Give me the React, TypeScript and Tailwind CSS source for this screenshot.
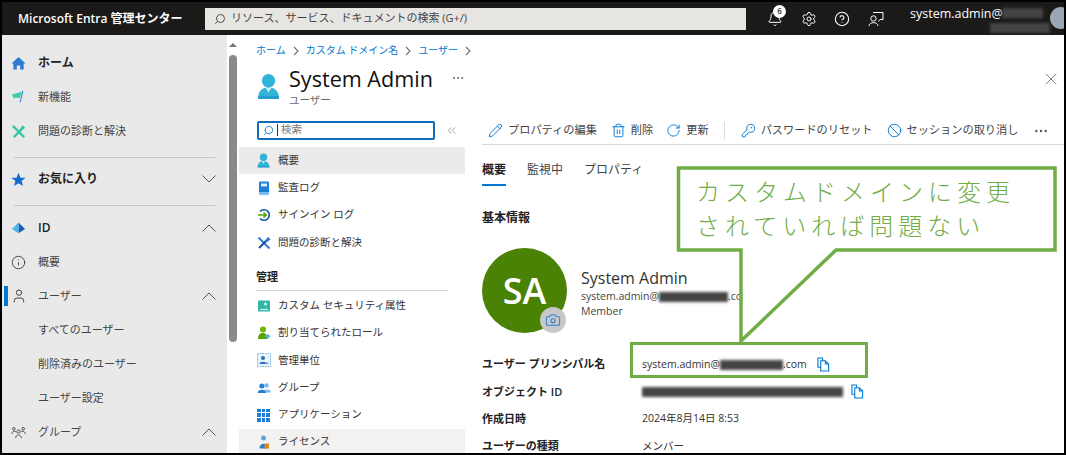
import type { ReactNode } from "react";
import {
  Ban,
  Bell,
  Camera,
  ChevronsLeft,
  CircleHelp,
  Ellipsis,
  Info,
  KeyRound,
  Pencil,
  RotateCw,
  Search,
  Settings,
  Trash2,
  User,
  X,
} from "lucide-react";

function Redact({ className }: { className: string }) {
  return <span className={`inline-block bg-[#444] blur-[1.5px] ${className}`} />;
}

function HomeIcon() {
  return (
    <svg viewBox="0 0 16 16" className="w-[15px] h-[15px]">
      <path d="M8 1 L15.5 8 L13.5 8 L13.5 14.5 L9.8 14.5 L9.8 10 L6.2 10 L6.2 14.5 L2.5 14.5 L2.5 8 L.5 8 Z" fill="#2b7cd3" />
    </svg>
  );
}

function FlagIcon() {
  return (
    <svg viewBox="0 0 16 16" className="w-[14px] h-[14px]">
      <path d="M1 5 L12 2 L10 9 L5 8.5 L3.5 10 Z" fill="#36d1a8" />
      <path d="M13.5 1 L10.5 14" stroke="#2b7cd3" strokeWidth="1.2" />
    </svg>
  );
}

function ToolsIcon() {
  return (
    <svg viewBox="0 0 16 16" className="w-[15px] h-[15px]">
      <path d="M2 2 L14 14" stroke="#36c5a8" strokeWidth="2.4" />
      <path d="M14 3 L3 14" stroke="#36c5a8" strokeWidth="2.4" />
      <path d="M9 6 L12 1.5 L15 4 L10.5 7.5 Z" fill="#36c5a8" />
    </svg>
  );
}

function StarIcon() {
  return (
    <svg viewBox="0 0 16 16" className="w-[15px] h-[15px]">
      <path d="M8 .8 L10.1 6 L15.6 6.2 L11.3 9.6 L12.8 15 L8 11.9 L3.2 15 L4.7 9.6 L.4 6.2 L5.9 6 Z" fill="#0f6cd4" />
    </svg>
  );
}

function DiamondIcon() {
  return (
    <svg viewBox="0 0 16 16" className="w-[15px] h-[15px]">
      <path d="M8 1.5 L15 8.5 L8 13 Z" fill="#1a5fb4" />
      <path d="M8 1.5 L1 8.5 L8 13 Z" fill="#4fb4ea" />
    </svg>
  );
}

function GroupOutlineIcon() {
  return (
    <svg viewBox="0 0 16 16" className="w-[15px] h-[15px]" fill="none" stroke="#444" strokeWidth="1">
      <circle cx="8" cy="7" r="1.7" />
      <circle cx="3" cy="4" r="1.4" />
      <circle cx="13" cy="4" r="1.4" />
      <path d="M5 14 C5 9.5 11 9.5 11 14 M1 9.5 C1 6.5 4 6 5.5 7.5 M15 9.5 C15 6.5 12 6 10.5 7.5" />
    </svg>
  );
}

function PersonIcon({ className, tone = "#32b4d9" }: { className: string; tone?: string }) {
  return (
    <svg viewBox="0 0 24 28" className={className}>
      <circle cx="12" cy="8" r="7" fill={tone} />
      <path d="M1 27 C1 18 6 15 12 15 C18 15 23 18 23 27 Z" fill={tone} />
      <path d="M9 15.5 L12 20 L15 15.5 Z" fill="#cdeef8" />
      <path d="M1 24 L23 24 L23 27 L1 27 Z" fill="#1283c4" opacity=".45" />
    </svg>
  );
}

function BookIcon() {
  return (
    <svg viewBox="0 0 14 14" className="w-[14px] h-[14px]">
      <rect x="2" y="0.5" width="10" height="13" rx="1" fill="#1f7fd6" />
      <rect x="4" y="2.5" width="6" height="3" fill="#d9ecfb" />
      <rect x="2" y="11" width="10" height="2.5" fill="#7cbcf0" />
    </svg>
  );
}

function SigninIcon() {
  return (
    <svg viewBox="0 0 14 14" className="w-[14px] h-[14px]" fill="none">
      <path d="M3 3.5 A5.3 5.3 0 1 1 3 10.5" stroke="#0f5fa8" strokeWidth="1.6" />
      <path d="M1 7 L9 7 M6.5 4.5 L9.2 7 L6.5 9.5" stroke="#57a300" strokeWidth="1.6" />
    </svg>
  );
}

function BladeToolsIcon() {
  return (
    <svg viewBox="0 0 14 14" className="w-[14px] h-[14px]">
      <path d="M1.5 1.5 L12.5 12.5" stroke="#2b7cd3" strokeWidth="2" />
      <path d="M12 2 L2 12" stroke="#154f8d" strokeWidth="2" />
      <path d="M8 5 L11 1 L13.5 3.5 L9.5 6.5 Z" fill="#2b7cd3" />
    </svg>
  );
}

function SecurityIcon() {
  return (
    <svg viewBox="0 0 14 14" className="w-[14px] h-[14px]">
      <rect x="1" y="1.5" width="12" height="11" rx="1" fill="#2fb8a6" />
      <circle cx="8.5" cy="5" r="1.6" fill="#d5f3ee" />
      <path d="M3 10.5 L11 10.5" stroke="#d5f3ee" strokeWidth="1.2" />
    </svg>
  );
}

function RoleIcon() {
  return (
    <svg viewBox="0 0 14 14" className="w-[14px] h-[14px]">
      <circle cx="6" cy="3.5" r="3" fill="#6bb700" />
      <path d="M1 13 C1 8 3.5 7 6 7 C8.5 7 10 8.5 10 13 Z" fill="#57a300" />
      <path d="M10.5 8 L13.5 10 L10.5 13 L8 10 Z" fill="#4fb4ea" />
    </svg>
  );
}

function AdminUnitIcon() {
  return (
    <svg viewBox="0 0 14 14" className="w-[14px] h-[14px]">
      <rect x=".5" y=".5" width="13" height="13" fill="#eaf3fb" stroke="#7cb4e6" strokeDasharray="1.5 1" />
      <circle cx="6" cy="5" r="2" fill="#2f6fbd" />
      <path d="M2.5 11 C2.5 8 9.5 8 9.5 11 Z" fill="#2f6fbd" />
      <path d="M8 11 C8 8.5 11.5 8.5 11.5 11 Z" fill="#6aa5e0" />
    </svg>
  );
}

function GroupIcon() {
  return (
    <svg viewBox="0 0 14 14" className="w-[14px] h-[14px]">
      <circle cx="9.5" cy="4.5" r="2.3" fill="#7cbcf0" />
      <path d="M6 11.5 C6 7.5 14 7.5 14 11.5 Z" fill="#7cbcf0" />
      <circle cx="4.8" cy="5" r="2.5" fill="#1f7fd6" />
      <path d="M.5 12 C.5 7.5 9 7.5 9 12 Z" fill="#1f7fd6" />
    </svg>
  );
}

function AppsIcon() {
  const cells = [0, 1, 2, 3, 4, 5, 6, 7, 8];
  return (
    <div className="grid grid-cols-3 gap-[1px] w-[13px] h-[13px]">
      {cells.map((c) => (
        <div key={c} className="bg-[#1f7fd6]" />
      ))}
    </div>
  );
}

function LicenseIcon() {
  return (
    <svg viewBox="0 0 14 14" className="w-[14px] h-[14px]">
      <circle cx="6.5" cy="3" r="2.5" fill="#5ea8dc" />
      <path d="M2.5 13.5 C2.5 7 10.5 7 10.5 13.5 Z" fill="#1f7fd6" />
      <rect x="7.5" y="8.5" width="4.5" height="5" fill="#e8871e" />
    </svg>
  );
}

function CopyIcon() {
  return (
    <svg viewBox="0 0 14 16" className="w-[13px] h-[15px]" fill="none" stroke="#0078d4" strokeWidth="1.2">
      <path d="M1 1 L6 1 L6 11 L1 11 Z" />
      <path d="M4 4 L9 4 L12.5 7.5 L12.5 15 L4 15 Z" fill="#fff" />
      <path d="M9 4 L9 7.5 L12.5 7.5" />
    </svg>
  );
}

function FeedbackIcon() {
  return (
    <svg viewBox="0 0 16 16" className="w-[16px] h-[16px]" fill="none" stroke="#fff" strokeWidth="1">
      <path d="M5 1.5 L15 1.5 L15 8.5 L12 8.5 L10.5 10.5" />
      <circle cx="5.5" cy="7.5" r="2.7" />
      <path d="M1 15 C1 10.5 10 10.5 10 15" />
    </svg>
  );
}

function Crumb() {
  return (
    <svg viewBox="0 0 6 10" className="w-[6px] h-[10px] shrink-0 mx-[7px]" fill="none" stroke="#6f6f6f" strokeWidth="1.1">
      <path d="M1 1 L5 5 L1 9" />
    </svg>
  );
}

function NavChevron({ dir }: { dir: "up" | "down" }) {
  return (
    <svg viewBox="0 0 14 8" className="ml-auto w-[14px] h-[8px]" fill="none" stroke="#555" strokeWidth="1">
      <path d={dir === "up" ? "M.5 7.5 L7 1 L13.5 7.5" : "M.5 .5 L7 7 L13.5 .5"} />
    </svg>
  );
}

type NavRowProps = {
  icon?: ReactNode;
  label: string;
  strong?: boolean;
  chevron?: "up" | "down";
  active?: boolean;
};

function NavRow({ icon, label, strong, chevron, active }: NavRowProps) {
  return (
    <div className="relative flex items-center h-[34px] pl-[9px] pr-[11px]">
      {active && <div className="absolute left-[2px] top-[7px] w-[4px] h-[20px] bg-[#0078d4]" />}
      <div className="w-[27px] flex items-center">{icon}</div>
      <span className={strong ? "text-[12px] font-semibold text-[#222]" : "text-[11px] text-[#444]"}>{label}</span>
      {chevron && <NavChevron dir={chevron} />}
    </div>
  );
}

function BladeRow({ icon, label, bg = "" }: { icon: ReactNode; label: string; bg?: string }) {
  return (
    <div className={`flex items-center h-[27.3px] pl-[18px] text-[10.5px] text-[#333] ${bg}`}>
      <div className="w-[21px] flex items-center">{icon}</div>
      {label}
    </div>
  );
}

function ToolButton({ icon, label }: { icon: ReactNode; label: string }) {
  return (
    <div className="flex items-center gap-[5px] text-[11.2px] text-[#444] whitespace-nowrap">
      {icon}
      {label}
    </div>
  );
}

function PropRow({ label, children }: { label: string; children: ReactNode }) {
  return (
    <div className="flex items-center h-[27.3px] whitespace-nowrap">
      <div className="w-[160px] text-[11px] font-semibold text-[#222]">{label}</div>
      <div className="flex items-center text-[10.5px] text-[#333]">{children}</div>
    </div>
  );
}

export default function App() {
  const toolIcon = "w-[15px] h-[15px] text-[#0078d4]";
  return (
    <div className="relative w-[1066px] h-[455px] overflow-hidden bg-black p-[2px] font-['Open_Sans','Noto_Sans_CJK_JP',sans-serif]">
      <div className="flex flex-col w-full h-full bg-white overflow-hidden">
        {/* Top bar */}
        <header className="flex items-center h-[33px] shrink-0 bg-[#1b1a19] text-white">
          <span className="ml-[16px] w-[187px] text-[12px] font-semibold whitespace-nowrap">Microsoft Entra 管理センター</span>
          <div className="flex items-center gap-[5px] w-[541px] h-[22px] pl-[9px] bg-[#e7e5e2] text-[11px] text-[#444]">
            <Search className="w-[12px] h-[12px] -scale-x-100" strokeWidth={1.8} />
            リソース、サービス、ドキュメントの検索 (G+/)
          </div>
          <div className="relative ml-[21px] w-[34px]">
            <Bell className="w-[16px] h-[16px]" strokeWidth={1.5} />
            <div className="absolute left-[6px] -top-[6px] flex items-center justify-center w-[13px] h-[13px] rounded-full bg-white text-[8px] font-semibold text-[#333]">6</div>
          </div>
          <Settings className="w-[16px] h-[16px]" strokeWidth={1.5} />
          <CircleHelp className="ml-[17px] w-[16px] h-[16px]" strokeWidth={1.6} />
          <div className="ml-[18px]"><FeedbackIcon /></div>
          <div className="relative ml-[26px] self-stretch w-[150px]">
            <span className="absolute left-0 top-[3px] text-[12.5px] whitespace-nowrap">system.admin@</span>
            <Redact className="absolute left-[92px] top-[6px] w-[41px] h-[10px]" />
            <Redact className="absolute left-[80px] top-[21px] w-[60px] h-[10px]" />
            <div className="absolute left-[140px] top-[5px] w-[22px] h-[22px] rounded-full bg-[#9aa6b2]" />
          </div>
        </header>

        <div className="flex flex-1 min-h-0">
          {/* Left nav */}
          <nav className="w-[225px] shrink-0 bg-[#e9e9e9] pt-[11px]">
            <NavRow icon={<HomeIcon />} label="ホーム" strong />
            <NavRow icon={<FlagIcon />} label="新機能" />
            <NavRow icon={<ToolsIcon />} label="問題の診断と解決" />
            <div className="mx-[12px] mt-[9px] mb-[4px] h-px bg-[#c8c8c8]" />
            <NavRow icon={<StarIcon />} label="お気に入り" strong chevron="down" />
            <div className="mx-[12px] mt-[9px] mb-[5px] h-px bg-[#c8c8c8]" />
            <NavRow icon={<DiamondIcon />} label="ID" strong chevron="up" />
            <NavRow icon={<Info className="w-[15px] h-[15px] text-[#444]" strokeWidth={1.5} />} label="概要" />
            <NavRow icon={<User className="w-[16px] h-[16px] text-[#444]" strokeWidth={1.5} />} label="ユーザー" chevron="up" active />
            <NavRow label="すべてのユーザー" />
            <NavRow label="削除済みのユーザー" />
            <NavRow label="ユーザー設定" />
            <NavRow icon={<GroupOutlineIcon />} label="グループ" chevron="up" />
          </nav>

          {/* Scrollbar */}
          <div className="flex flex-col items-center w-[12px] shrink-0 pt-[8px]">
            <div className="w-0 h-0 border-x-[4px] border-x-transparent border-b-[4px] border-b-[#777]" />
            <div className="mt-[8px] w-[8px] h-[287px] rounded-full bg-[#8a8a8a]" />
          </div>

          {/* Blade menu */}
          <aside className="w-[226px] shrink-0">
            <div className="flex items-center h-[31px] pl-[17px] text-[10px] text-[#0078d4] whitespace-nowrap">
              ホーム
              <Crumb />
              カスタム ドメイン名
              <Crumb />
              ユーザー
              <Crumb />
            </div>
            <div className="flex items-start h-[46px] pl-[18px]">
              <PersonIcon className="w-[23px] h-[27px] mt-[7px]" />
              <div className="ml-[9px] -mt-[1px]">
                <div className="text-[21.6px] leading-[28px] text-[#111] whitespace-nowrap">System Admin</div>
                <div className="text-[10.5px] leading-[14px] text-[#666]">ユーザー</div>
              </div>
              <Ellipsis className="ml-auto mt-[5px] w-[14px] h-[14px] text-[#666]" strokeWidth={1.6} />
            </div>
            <div className="flex items-center h-[35px] pl-[18px] pt-[1px]">
              <div className="flex items-center gap-[3px] w-[178px] h-[19px] pl-[4px] rounded-[2px] border-2 border-[#0f6cbd] text-[10.5px] text-[#777]">
                <Search className="w-[11px] h-[11px] text-[#0078d4] -scale-x-100" strokeWidth={1.8} />
                <div className="w-px h-[12px] bg-[#333]" />
                検索
              </div>
              <ChevronsLeft className="ml-[10px] w-[13px] h-[13px] text-[#888]" strokeWidth={1.5} />
            </div>
            <BladeRow icon={<PersonIcon className="w-[13px] h-[15px]" />} label="概要" bg="bg-[#edebe9]" />
            <BladeRow icon={<BookIcon />} label="監査ログ" />
            <BladeRow icon={<SigninIcon />} label="サインイン ログ" />
            <BladeRow icon={<BladeToolsIcon />} label="問題の診断と解決" />
            <div className="mx-[17px] mt-[13px] h-[22px] pb-[4px] flex items-center border-b border-[#d2d0ce] text-[11px] font-semibold text-[#222]">管理</div>
            <div className="h-px" />
            <BladeRow icon={<SecurityIcon />} label="カスタム セキュリティ属性" />
            <BladeRow icon={<RoleIcon />} label="割り当てられたロール" />
            <BladeRow icon={<AdminUnitIcon />} label="管理単位" />
            <BladeRow icon={<GroupIcon />} label="グループ" />
            <BladeRow icon={<AppsIcon />} label="アプリケーション" />
            <BladeRow icon={<LicenseIcon />} label="ライセンス" bg="bg-[#f3f2f1]" />
          </aside>

          {/* Main content */}
          <main className="flex-1 min-w-0 pl-[17px]">
            <div className="flex justify-end h-[85px] pt-[34px] pr-[3px]">
              <X className="w-[20px] h-[20px] text-[#666]" strokeWidth={1} />
            </div>
            <div className="flex items-center h-[25px] border-b border-[#d8d8d8] pb-[3px] pl-[6px]">
              <ToolButton icon={<Pencil className={toolIcon} strokeWidth={1.5} />} label="プロパティの編集" />
              <div className="w-[14px]" />
              <ToolButton icon={<Trash2 className={toolIcon} strokeWidth={1.5} />} label="削除" />
              <div className="w-[13px]" />
              <ToolButton icon={<RotateCw className={toolIcon} strokeWidth={1.5} />} label="更新" />
              <div className="ml-[15px] mr-[16px] w-px h-[18px] bg-[#ddd]" />
              <ToolButton icon={<KeyRound className={toolIcon} strokeWidth={1.5} />} label="パスワードのリセット" />
              <div className="w-[14px]" />
              <ToolButton icon={<Ban className={toolIcon} strokeWidth={1.5} />} label="セッションの取り消し" />
              <Ellipsis className="ml-[15px] w-[16px] h-[16px] text-[#555]" strokeWidth={1.6} />
            </div>
            <div className="flex gap-[21px] h-[49px] items-center text-[12px] text-[#444]">
              <div className="relative font-semibold text-[#222]">
                概要
                <div className="absolute left-0 right-0 top-[23px] h-[2px] bg-[#0078d4]" />
              </div>
              <div>監視中</div>
              <div>プロパティ</div>
            </div>
            <div className="mt-[16px] text-[12px] leading-[16px] font-semibold text-[#222]">基本情報</div>
            <div className="flex items-center mt-[22px]">
              <div className="relative flex items-center justify-center w-[85px] h-[85px] rounded-full bg-[#498205] text-[36px] font-semibold text-white">
                SA
                <div className="absolute right-[1px] bottom-[0px] flex items-center justify-center w-[26px] h-[26px] rounded-full bg-[#c8c8c8]">
                  <Camera className="w-[16px] h-[16px] text-[#2f80d0]" strokeWidth={1.6} />
                </div>
              </div>
              <div className="ml-[14px] mt-[5px]">
                <div className="text-[16px] leading-[22px] text-[#333]">System Admin</div>
                <div className="flex items-center h-[15px] text-[10.5px] text-[#444] whitespace-nowrap">
                  system.admin@
                  <Redact className="w-[69px] h-[10px]" />
                  .com
                </div>
                <div className="text-[10.5px] leading-[15px] text-[#444]">Member</div>
              </div>
            </div>
            <div className="mt-[18px]">
              <PropRow label="ユーザー プリンシパル名">
                system.admin@
                <Redact className="w-[63px] h-[10px]" />
                .com
                <span className="ml-[10px]"><CopyIcon /></span>
              </PropRow>
              <PropRow label="オブジェクト ID">
                <Redact className="w-[201px] h-[10px]" />
                <span className="ml-[8px]"><CopyIcon /></span>
              </PropRow>
              <PropRow label="作成日時">2024年8月14日 8:53</PropRow>
              <PropRow label="ユーザーの種類">メンバー</PropRow>
            </div>
          </main>
        </div>
      </div>

      {/* Callout annotation */}
      <svg viewBox="0 0 1066 455" className="absolute inset-0 w-[1066px] h-[455px] pointer-events-none">
        <path d="M678.5 168 L1055 168 L1055 250 L836 250 L741 341 L741 250 L678.5 250 Z" fill="#fff" stroke="#70ad47" strokeWidth="3.5" />
      </svg>
      <div className="absolute left-[696px] top-[175px] text-[24px] leading-[34px] tracking-[5px] font-light text-[#70ad47] whitespace-nowrap">
        カスタムドメインに変更
        <br />
        されていれば問題ない
      </div>
      <div className="absolute left-[630px] top-[342px] w-[238px] h-[36px] border-[3.5px] border-[#70ad47]" />
    </div>
  );
}
